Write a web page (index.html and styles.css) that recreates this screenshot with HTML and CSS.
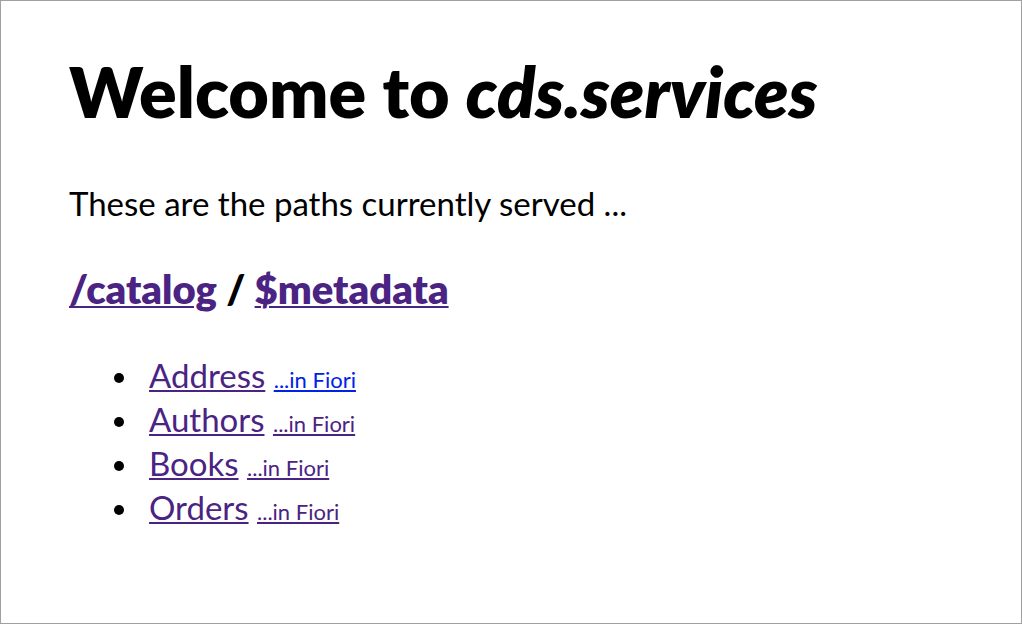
FILE: index.html
```html
<!DOCTYPE html>
<html lang="en">
<head>
<meta charset="utf-8">
<title>cds.services</title>
<link rel="stylesheet" href="styles.css">
</head>
<body>
<main class="page">
  <h1 class="title">Welcome to <em class="product">cds.services</em></h1>
  <p class="intro">These are the paths currently served ...</p>
  <h2 class="service"><a class="link" href="#catalog">/catalog</a> / <a class="link" href="#metadata">$metadata</a></h2>
  <ul class="entities">
    <li class="entity"><a class="link" href="#address">Address</a> <a class="link preview fresh" href="#address-fiori">...in Fiori</a></li>
    <li class="entity"><a class="link" href="#authors">Authors</a> <a class="link preview" href="#authors-fiori">...in Fiori</a></li>
    <li class="entity"><a class="link" href="#books">Books</a> <a class="link preview" href="#books-fiori">...in Fiori</a></li>
    <li class="entity"><a class="link" href="#orders">Orders</a> <a class="link preview" href="#orders-fiori">...in Fiori</a></li>
  </ul>
</main>
</body>
</html>
```
FILE: styles.css
```css
* {
  box-sizing: border-box;
}

body {
  margin: 0;
  background: #fff;
  color: #000;
  font-family: Lato, sans-serif;
  font-size: 33px;
  line-height: 44px;
}

.page {
  min-height: 100vh;
  padding: 46px 68px;
  border: 1px solid #a0a0a0;
}

.title {
  margin: 0 0 46px;
  font-size: 70px;
  font-weight: 800;
  line-height: 88px;
}

.product {
  font-style: italic;
}

.intro {
  margin: 0 0 38px;
}

.service {
  margin: 0 0 38px;
  font-size: 40px;
  font-weight: 800;
  line-height: 52px;
}

.entities {
  margin: 0;
  padding-left: 72px;
}

.entity {
  padding-left: 8px;
}

.entity::marker {
  font-size: 30px;
}

.link {
  color: #4b2383;
  text-decoration: underline;
  text-decoration-thickness: 2px;
  text-underline-offset: 2px;
}

.preview {
  font-size: 22px;
  line-height: 24px;
}

.fresh {
  color: #0022e6;
}
```
